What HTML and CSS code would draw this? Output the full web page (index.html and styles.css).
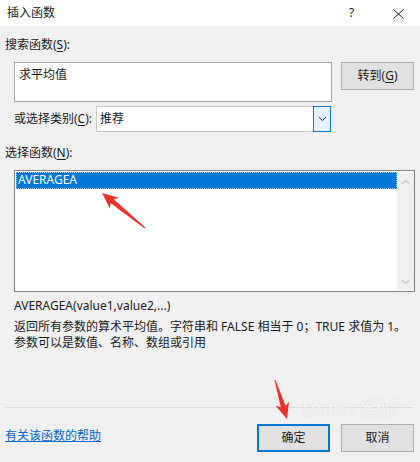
FILE: index.html
```html
<!DOCTYPE html>
<html lang="zh-CN">
<head>
<meta charset="utf-8">
<title>插入函数</title>
<link rel="stylesheet" href="styles.css">
</head>
<body>
<div class="dialog">
  <div class="titlebar">
    <span class="title">插入函数</span>
    <span class="help">?</span>
    <svg class="close" width="11" height="10" viewBox="0 0 11 10"><path d="M0.5 0.5 L10.5 9.5 M10.5 0.5 L0.5 9.5" stroke="#222" stroke-width="1" fill="none"/></svg>
  </div>
  <div class="body">
    <div class="label lbl-search">搜索函数(<u>S</u>):</div>
    <div class="row-search">
      <div class="textarea">求平均值</div>
      <div class="btn btn-go">转到(<u>G</u>)</div>
    </div>
    <div class="row-cat">
      <span class="label cat-label">或选择类别(<u>C</u>):</span>
      <div class="select">
        <span class="select-text">推荐</span>
        <span class="select-btn"><svg width="9" height="6" viewBox="0 0 9 6"><path d="M0.8 1 L4.5 4.6 L8.2 1" stroke="#333" stroke-width="1" fill="none"/></svg></span>
      </div>
    </div>
    <div class="label lbl-func">选择函数(<u>N</u>):</div>
    <div class="listbox">
      <div class="items">
        <div class="item selected">AVERAGEA</div>
      </div>
      <div class="scrollbar">
        <svg width="9" height="6" viewBox="0 0 9 6"><path d="M0.8 5 L4.5 1.4 L8.2 5" stroke="#c4c4c4" stroke-width="1.2" fill="none"/></svg>
        <svg width="9" height="6" viewBox="0 0 9 6"><path d="M0.8 1 L4.5 4.6 L8.2 1" stroke="#c4c4c4" stroke-width="1.2" fill="none"/></svg>
      </div>
    </div>
    <div class="signature">AVERAGEA(value1,value2,...)</div>
    <div class="desc">返回所有参数的算术平均值。字符串和 FALSE 相当于 0；TRUE 求值为 1。<br>参数可以是数值、名称、数组或引用</div>
    <div class="separator"></div>
    <div class="footer">
      <a class="helplink">有关该函数的帮助</a>
      <div class="btn btn-ok">确定</div>
      <div class="btn btn-cancel">取消</div>
    </div>
  </div>
  <div class="watermark">Bai<span class="wm-du">du</span> 经验</div>
  <svg class="arrows" width="420" height="462" viewBox="0 0 420 462">
    <polygon fill="#ee2f2a" points="102,193 118.8,197.7 113.7,199.3 145.3,227.6 144.7,228.4 110.5,203.1 110,208.5"/>
    <polygon fill="#ee2f2a" points="287,419 289,401.6 285.6,405.9 275.5,379.9 274.5,380.1 280.8,407.3 275.6,405.8"/>
  </svg>
</div>
</body>
</html>
```

FILE: styles.css
```css
* { box-sizing: border-box; }
html, body { margin: 0; padding: 0; }
body {
  width: 420px;
  height: 462px;
  overflow: hidden;
  background: #f0f0f0;
  font-family: "Noto Sans", "Noto Sans CJK SC", sans-serif;
  font-size: 12px;
  color: #1a1a1a;
}
u { text-decoration: underline; text-underline-offset: 2px; }
.dialog { position: relative; width: 420px; height: 462px; }
.titlebar {
  height: 26px;
  background: #ffffff;
  display: flex;
  align-items: center;
  padding-left: 7px;
}
.title { flex: 1; line-height: 16px; }
.help { width: 44px; line-height: 16px; font-size: 12px; color: #222; }
.close { margin-right: 16px; margin-top: 1px; }
.body { padding: 0 6px 0 5px; }
.label { line-height: 16px; display: block; }
.lbl-search { margin-top: 11px; }
.row-search { display: flex; align-items: flex-start; margin-top: 9px; padding-left: 9px; }
.textarea {
  width: 318px;
  height: 40px;
  background: #fff;
  border: 1px solid #a3a3a3;
  padding: 4px 0 0 4px;
  line-height: 16px;
}
.btn {
  width: 73px;
  height: 28px;
  background: #e1e1e1;
  border: 1px solid #adadad;
  display: flex;
  align-items: center;
  justify-content: center;
  line-height: 16px;
}
.btn-go { margin-left: 9px; }
.row-cat { display: flex; align-items: center; margin-top: 4px; padding-left: 9px; height: 26px; }
.cat-label { width: 82px; }
.select {
  width: 235px;
  height: 26px;
  background: #fff;
  border: 1px solid #c8c8c8;
  display: flex;
  align-items: stretch;
}
.select-text { flex: 1; line-height: 24px; padding-left: 3px; }
.select-btn {
  width: 18px;
  margin: -1px -1px -1px 0;
  border: 1px solid #0078d7;
  background: #e5f1fb;
  display: flex;
  align-items: center;
  justify-content: center;
}
.lbl-func { margin-top: 13px; }
.listbox {
  margin: 9px 0 0 9px;
  width: 401px;
  height: 122px;
  background: #fff;
  border: 1px solid #838383;
  display: flex;
  padding: 1px 0 1px 1px;
}
.items { flex: 1; }
.item {
  height: 17px;
  line-height: 16px;
  padding-left: 2px;
  color: #fff;
}
.selected { background: #0078d7; outline: 1px dotted #9fc8ee; outline-offset: -1px; }
.scrollbar {
  width: 17px;
  background: #f0f0f0;
  display: flex;
  flex-direction: column;
  justify-content: space-between;
  align-items: center;
  padding: 7px 0 5px;
}
.signature { margin: 6px 0 0 9px; line-height: 16px; }
.desc { margin: 5px 0 0 9px; line-height: 16px; white-space: nowrap; }
.separator { margin-top: 56px; height: 1px; background: #dcdcdc; margin-right: 0; }
.footer { display: flex; align-items: center; margin-top: 16px; }
.helplink { flex: 1; color: #0066cc; text-decoration: underline; line-height: 16px; margin-top: -4px; }
.btn-ok { border: 2px solid #0078d7; width: 73px; }
.btn-cancel { margin-left: 11px; }
.watermark {
  position: absolute;
  left: 302px;
  top: 398px;
  pointer-events: none;
  font-family: "Liberation Sans", "Noto Sans CJK SC", sans-serif;
  font-size: 20px;
  font-weight: bold;
  color: rgba(255, 255, 255, 0.7);
  text-shadow: 0 0 1px rgba(140, 140, 140, 0.35);
  line-height: 22px;
}
.wm-du { font-size: 18px; }
.arrows { position: absolute; left: 0; top: 0; pointer-events: none; }
```
